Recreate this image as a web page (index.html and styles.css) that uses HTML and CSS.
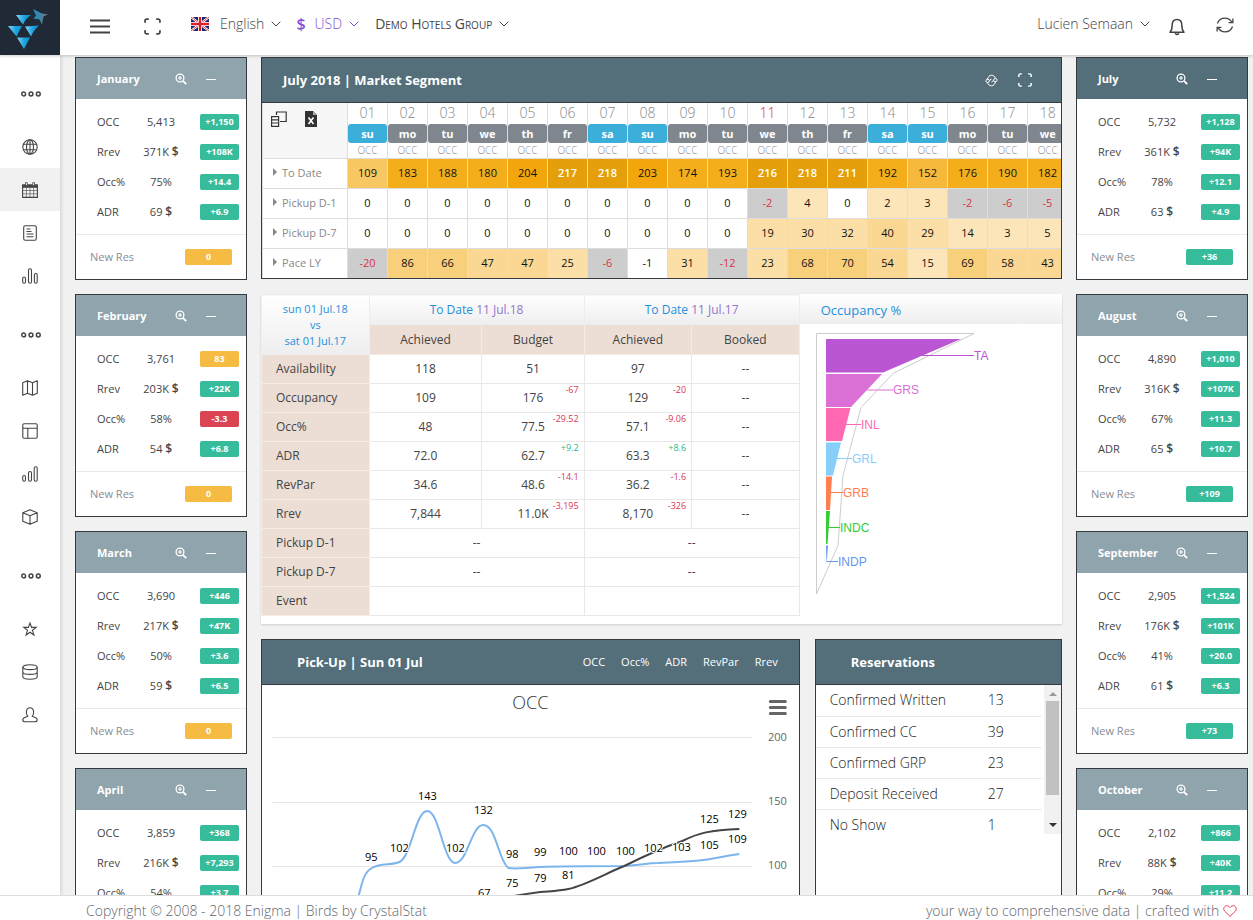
FILE: index.html
```html
<!DOCTYPE html>
<html lang="en">

<head>
    <meta charset="UTF-8">
    <title>Enigma | Market Segment</title>
    <link rel="stylesheet" href="styles.css">
</head>

<body>
    <!-- icons -->
    <svg class="defs" aria-hidden="true">
        <symbol id="i-zoom" viewBox="0 0 12 12"><g fill="none" stroke="currentColor"><circle cx="5" cy="5" r="3.9" stroke-width="1.3"/><path d="M3 5h4M5 3v4" stroke-width="1.1"/><path d="M7.9 7.9l3.3 3.3" stroke-width="1.9"/></g></symbol>
        <symbol id="i-minus" viewBox="0 0 12 12"><path d="M1 6.5h10" stroke="currentColor"/></symbol>
        <symbol id="i-down" viewBox="0 0 10 6"><path d="M.7.7L5 5 9.300.7" fill="none" stroke="currentColor"/></symbol>
        <symbol id="i-dots" viewBox="0 0 20 6"><g fill="none" stroke="currentColor" stroke-width="1.5"><circle cx="2.700" cy="3" r="1.900"/><circle cx="10" cy="3" r="1.900"/><circle cx="17.300" cy="3" r="1.900"/></g></symbol>
        <symbol id="i-full" viewBox="0 0 16 16"><path d="M1 4.500V2.500Q1 1 2.500 1H4.500M11.500 1H13.500Q15 1 15 2.500V4.500M15 11.500V13.500Q15 15 13.500 15H11.500M4.500 15H2.500Q1 15 1 13.500V11.500" fill="none" stroke="currentColor" stroke-width="1.700"/></symbol>
    </svg>

    <header class="topbar">
        <a class="logo" href="#" aria-label="Home">
            <svg width="60" height="55" viewBox="0 0 60 55">
                <defs>
                    <linearGradient id="tri" x1="0" y1="0" x2="1" y2="0"><stop offset="0" stop-color="#8fd4f3"/><stop offset=".55" stop-color="#1ba3e0"/><stop offset="1" stop-color="#1390cf"/></linearGradient>
                    <linearGradient id="bird" x1="0" y1="0" x2="1" y2="0"><stop offset="0" stop-color="#1c8fc4"/><stop offset="1" stop-color="#6d7880"/></linearGradient>
                </defs>
                <g fill="url(#tri)"><path d="M16 15h15q-5 3-8 9.500z"/><path d="M8 26h14l-5.500 10.500z"/><path d="M25 26.500l14-1q-5 4-8 11z"/><path d="M17 37.500h13l-6 11.500z"/></g>
                <path d="M33 9l6 3 3 1.500 6 1-4.500 2-1.500 8-2.500-5-6-1 2.500-3z" fill="url(#bird)"/>
            </svg>
        </a>
        <button class="tool menu" aria-label="Menu"><svg width="20" height="15" viewBox="0 0 20 15"><path d="M0 1.500h20M0 7.500h20M0 13.500h20" stroke="currentColor" stroke-width="1.800"/></svg></button>
        <button class="tool full" aria-label="Fullscreen"><svg width="17" height="17"><use href="#i-full"/></svg></button>
        <button class="drop lang">
            <svg width="18" height="14" viewBox="0 0 18 14"><path fill="#1c2a6b" d="M0 0h18v14H0z"/><path d="M0 0l18 14M18 0L0 14" stroke="#fff" stroke-width="2.200"/><path d="M0 0l18 14M18 0L0 14" stroke="#d8202f" stroke-width=".8"/><path d="M9 0v14M0 7h18" stroke="#fff" stroke-width="4"/><path d="M9 0v14M0 7h18" stroke="#d8202f" stroke-width="2.400"/></svg>
            <span>English</span><svg class="chev"><use href="#i-down"/></svg>
        </button>
        <button class="drop cur"><b>$</b><span>USD</span><svg class="chev"><use href="#i-down"/></svg></button>
        <button class="drop group"><span>Demo Hotels Group</span><svg class="chev"><use href="#i-down"/></svg></button>
        <button class="drop user"><span>Lucien Semaan</span><svg class="chev"><use href="#i-down"/></svg></button>
        <button class="tool bell" aria-label="Notifications"><svg width="16" height="18" viewBox="0 0 16 18"><path d="M1 14.200h14c-2-2-2.200-4-2.200-7.200C12.800 3.500 11 1.500 8 1.500S3.200 3.500 3.200 7c0 3.200-.2 5.200-2.200 7.200z" fill="none" stroke="currentColor" stroke-width="1.500" stroke-linejoin="round"/><path d="M6.200 15.200q1.800 2.400 3.600 0" fill="none" stroke="currentColor" stroke-width="1.500"/></svg></button>
        <button class="tool sync" aria-label="Refresh"><svg width="18" height="16" viewBox="0 0 18 16"><path d="M1.500 6.500C2.500 3.300 5.500 1.200 9 1.200c3 0 5.300 1.500 6.800 4M16.500 9.500C15.500 12.700 12.500 14.800 9 14.800c-3 0-5.300-1.500-6.800-4M16.900 1.500v4.200h-4.300M1.100 14.500v-4.200h4.300" fill="none" stroke="currentColor" stroke-width="1.300"/></svg></button>
    </header>

    <nav class="side">
        <div class="sep"><svg width="20" height="6"><use href="#i-dots"/></svg></div>
        <a href="#" aria-label="World"><svg viewBox="0 0 16 16"><circle cx="8" cy="8" r="7.200"/><ellipse cx="8" cy="8" rx="3.500" ry="7.200"/><path d="M1.500 5.200h13M1.500 10.800h13M8 1v14"/></svg></a>
        <a href="#" class="active" aria-label="Calendar"><svg viewBox="0 0 16 16"><path d="M.6 3h14.800v12.400H.6z"/><path d="M.8 8.500h14.400M.8 11.800h14.400M4.400 5.500v9.700M8 5.500v9.700M11.600 5.500v9.700" stroke-width=".6"/><path d="M.8 3h14.400v2.200H.8z" fill="currentColor"/><path d="M3.500.6h1.800v3H3.500zM10.700.6h1.800v3h-1.800z" fill="#fff" stroke-width=".8"/></svg></a>
        <a href="#" aria-label="Reports"><svg viewBox="0 0 16 16"><rect x="1.700" y=".7" width="12.600" height="14.600" rx="1.500"/><path d="M4.500 4h4M4.500 6.500h5M4.500 9h7M4.500 11.700h7"/></svg></a>
        <a href="#" aria-label="Statistics"><svg viewBox="0 0 16 16"><rect x=".7" y="9" width="2.800" height="6.200" rx="1.400"/><rect x="6.500" y=".8" width="3" height="14.400" rx="1.500"/><rect x="12.400" y="5.500" width="2.800" height="9.700" rx="1.400"/></svg></a>
        <div class="sep"><svg width="20" height="6"><use href="#i-dots"/></svg></div>
        <a href="#" aria-label="Map"><svg viewBox="0 0 16 16"><path d="M.7 2.700l4.800-2 5 2 4.800-2v12.600l-4.800 2-5-2-4.800 2zM5.500.7v12.600M10.500 2.700v12.600" stroke-linejoin="round"/></svg></a>
        <a href="#" aria-label="Layout"><svg viewBox="0 0 16 16"><rect x=".8" y=".8" width="14.400" height="14.400" rx="1.200"/><path d="M.8 5.300h14.400M5.800 5.300v10"/></svg></a>
        <a href="#" aria-label="Performance"><svg viewBox="0 0 16 16"><rect x=".7" y="9.500" width="2.800" height="5.700" rx="1.400"/><rect x="6.500" y="5.500" width="3" height="9.700" rx="1.500"/><rect x="12.200" y=".8" width="3" height="14.400" rx="1.500"/></svg></a>
        <a href="#" aria-label="Packages"><svg viewBox="0 0 16 16"><path d="M8 .7l7.200 3v8.600L8 15.300.8 12.300V3.700zM.8 3.700L8 6.700l7.200-3M8 6.700v8.600" stroke-linejoin="round"/></svg></a>
        <div class="sep"><svg width="20" height="6"><use href="#i-dots"/></svg></div>
        <a href="#" aria-label="Favorites"><svg viewBox="0 0 16 16"><path d="M8 2l1.600 4.400h4.600l-3.700 2.900 1.400 4.700L8 11.200 4.100 14l1.400-4.700-3.700-2.900h4.600z"/></svg></a>
        <a href="#" aria-label="Data"><svg viewBox="0 0 16 16"><ellipse cx="8" cy="3.200" rx="7.200" ry="2.400"/><path d="M.8 3.200v9.600c0 3.200 14.400 3.200 14.400 0V3.200M.8 8c0 3.200 14.400 3.200 14.400 0"/></svg></a>
        <a href="#" aria-label="Account"><svg viewBox="0 0 16 16"><path d="M5.800 9.300C3.500 7 3.800.7 8 .7s4.500 6.300 2.200 8.600c2.500 1 5 1.200 5 3.200 0 1.800-.7 2.300-2 2.300H2.800c-1.300 0-2-.5-2-2.300 0-2 2.500-2.200 5-3.200z"/></svg></a>
    </nav>

    <main class="main">
        <!-- first half of the year -->
        <section class="months">
            <article class="card">
                <h3><span>January</span><svg><use href="#i-zoom"/></svg><svg><use href="#i-minus"/></svg></h3>
                <dl>
                    <dt>OCC</dt><dd>5,413</dd><dd class="tag">+1,150</dd>
                    <dt>Rrev</dt><dd>371K <b>$</b></dd><dd class="tag">+108K</dd>
                    <dt>Occ%</dt><dd>75%</dd><dd class="tag">+14.4</dd>
                    <dt>ADR</dt><dd>69 <b>$</b></dd><dd class="tag">+6.9</dd>
                </dl>
                <p>New Res <span class="tag warn">0</span></p>
            </article>
            <article class="card">
                <h3><span>February</span><svg><use href="#i-zoom"/></svg><svg><use href="#i-minus"/></svg></h3>
                <dl>
                    <dt>OCC</dt><dd>3,761</dd><dd class="tag warn">83</dd>
                    <dt>Rrev</dt><dd>203K <b>$</b></dd><dd class="tag">+22K</dd>
                    <dt>Occ%</dt><dd>58%</dd><dd class="tag bad">-3.3</dd>
                    <dt>ADR</dt><dd>54 <b>$</b></dd><dd class="tag">+6.8</dd>
                </dl>
                <p>New Res <span class="tag warn">0</span></p>
            </article>
            <article class="card">
                <h3><span>March</span><svg><use href="#i-zoom"/></svg><svg><use href="#i-minus"/></svg></h3>
                <dl>
                    <dt>OCC</dt><dd>3,690</dd><dd class="tag">+446</dd>
                    <dt>Rrev</dt><dd>217K <b>$</b></dd><dd class="tag">+47K</dd>
                    <dt>Occ%</dt><dd>50%</dd><dd class="tag">+3.6</dd>
                    <dt>ADR</dt><dd>59 <b>$</b></dd><dd class="tag">+6.5</dd>
                </dl>
                <p>New Res <span class="tag warn">0</span></p>
            </article>
            <article class="card">
                <h3><span>April</span><svg><use href="#i-zoom"/></svg><svg><use href="#i-minus"/></svg></h3>
                <dl>
                    <dt>OCC</dt><dd>3,859</dd><dd class="tag">+368</dd>
                    <dt>Rrev</dt><dd>216K <b>$</b></dd><dd class="tag">+7,293</dd>
                    <dt>Occ%</dt><dd>54%</dd><dd class="tag">+3.7</dd>
                </dl>
            </article>
        </section>

        <div class="center">
            <section class="panel market">
                <h2>July 2018 | Market Segment
                    <button aria-label="Reload"><svg width="13" height="13" viewBox="0 0 13 13"><g fill="none" stroke="currentColor"><path d="M2.500 5.500C3 2.800 4.500 1.200 6.500 1.200c2 0 3.300 1.200 3.900 3M10.500 7.500c-.5 2.700-2 4.300-4 4.300-2 0-3.300-1.200-3.900-3"/><circle cx="2.600" cy="6.800" r="1.700"/><circle cx="10.400" cy="6.200" r="1.700"/><path d="M4.200 6.500l2.300-1.500M8.800 6.500l-2.300 1.500"/></g></svg></button>
                    <button aria-label="Fullscreen"><svg width="14" height="14"><use href="#i-full"/></svg></button>
                </h2>
                <div class="clip">
                    <table>
                        <thead>
                            <tr>
                                <th class="corner" rowspan="3">
                                    <svg width="16" height="16" viewBox="0 0 16 16"><path d="M5.500 4V1h9.700v9.500H9" fill="none" stroke="#333" stroke-width="1.200"/><path d="M.6 5.600h7v9.800h-7zM.6 8.800h7M.6 12h7" fill="#fff" stroke="#333" stroke-width="1.200"/></svg>
                                    <svg width="12" height="16" viewBox="0 0 12 16"><path d="M0 0h8l4 4v12H0z" fill="#333"/><path d="M8 0v4h4z" fill="#aaa"/><path d="M3.500 6.500l5 6.500M8.500 6.500l-5 6.500" stroke="#fff" stroke-width="1.600"/></svg>
                                </th>
                                <th>01</th><th>02</th><th>03</th><th>04</th><th>05</th><th>06</th><th>07</th><th>08</th><th>09</th><th>10</th><th class="today">11</th><th>12</th><th>13</th><th>14</th><th>15</th><th>16</th><th>17</th><th>18</th>
                            </tr>
                            <tr class="days">
                                <th><i class="we">su</i></th><th><i>mo</i></th><th><i>tu</i></th><th><i>we</i></th><th><i>th</i></th><th><i>fr</i></th><th><i class="we">sa</i></th><th><i class="we">su</i></th><th><i>mo</i></th><th><i>tu</i></th><th><i>we</i></th><th><i>th</i></th><th><i>fr</i></th><th><i class="we">sa</i></th><th><i class="we">su</i></th><th><i>mo</i></th><th><i>tu</i></th><th><i>we</i></th>
                            </tr>
                            <tr class="occ">
                                <th>OCC</th><th>OCC</th><th>OCC</th><th>OCC</th><th>OCC</th><th>OCC</th><th>OCC</th><th>OCC</th><th>OCC</th><th>OCC</th><th>OCC</th><th>OCC</th><th>OCC</th><th>OCC</th><th>OCC</th><th>OCC</th><th>OCC</th><th>OCC</th>
                            </tr>
                        </thead>
                        <tbody>
                            <tr>
                                <th>To Date</th><td class="h5">109</td><td class="h7">183</td><td class="h7">188</td><td class="h7">180</td><td class="h8">204</td><td class="h9">217</td><td class="h9">218</td><td class="h8">203</td><td class="h7">174</td><td class="h7">193</td><td class="h9">216</td><td class="h9">218</td><td class="h9">211</td><td class="h7">192</td><td class="h6">152</td><td class="h7">176</td><td class="h7">190</td><td class="h7">182</td>
                            </tr>
                            <tr>
                                <th>Pickup D-1</th><td>0</td><td>0</td><td>0</td><td>0</td><td>0</td><td>0</td><td>0</td><td>0</td><td>0</td><td>0</td><td class="neg">-2</td><td class="h1">4</td><td>0</td><td class="h1">2</td><td class="h1">3</td><td class="neg">-2</td><td class="neg">-6</td><td class="neg">-5</td>
                            </tr>
                            <tr>
                                <th>Pickup D-7</th><td>0</td><td>0</td><td>0</td><td>0</td><td>0</td><td>0</td><td>0</td><td>0</td><td>0</td><td>0</td><td class="h2">19</td><td class="h2">30</td><td class="h2">32</td><td class="h3">40</td><td class="h2">29</td><td class="h1">14</td><td class="h1">3</td><td class="h1">5</td>
                            </tr>
                            <tr>
                                <th>Pace LY</th><td class="neg">-20</td><td class="h4">86</td><td class="h4">66</td><td class="h3">47</td><td class="h3">47</td><td class="h2">25</td><td class="neg">-6</td><td>-1</td><td class="h2">31</td><td class="neg">-12</td><td class="h2">23</td><td class="h4">68</td><td class="h4">70</td><td class="h3">54</td><td class="h1">15</td><td class="h4">69</td><td class="h3">58</td><td class="h3">43</td>
                            </tr>
                        </tbody>
                    </table>
                </div>
            </section>

            <section class="compare">
                <table>
                    <colgroup><col class="c1"><col class="c2"><col class="c3"><col class="c4"><col class="c5"></colgroup>
                    <thead>
                        <tr><th class="versus" rowspan="2">sun 01 Jul.18<br>vs<br>sat 01 Jul.17</th><th class="date" colspan="2">To Date <span>11 Jul.18</span></th><th class="date" colspan="2">To Date <span>11 Jul.17</span></th></tr>
                        <tr><th>Achieved</th><th>Budget</th><th>Achieved</th><th>Booked</th></tr>
                    </thead>
                    <tbody>
                        <tr><th>Availability</th><td>118</td><td>51</td><td>97</td><td>--</td></tr>
                        <tr><th>Occupancy</th><td>109</td><td>176<sup>-67</sup></td><td>129<sup>-20</sup></td><td>--</td></tr>
                        <tr><th>Occ%</th><td>48</td><td>77.5<sup>-29.52</sup></td><td>57.1<sup>-9.06</sup></td><td>--</td></tr>
                        <tr><th>ADR</th><td>72.0</td><td>62.7<sup class="up">+9.2</sup></td><td>63.3<sup class="up">+8.6</sup></td><td>--</td></tr>
                        <tr><th>RevPar</th><td>34.6</td><td>48.6<sup>-14.1</sup></td><td>36.2<sup>-1.6</sup></td><td>--</td></tr>
                        <tr><th>Rrev</th><td>7,844</td><td>11.0K<sup>-3,195</sup></td><td>8,170<sup>-326</sup></td><td>--</td></tr>
                        <tr><th>Pickup D-1</th><td colspan="2">--</td><td colspan="2">--</td></tr>
                        <tr><th>Pickup D-7</th><td colspan="2">--</td><td colspan="2">--</td></tr>
                        <tr><th>Event</th><td colspan="2"></td><td colspan="2"></td></tr>
                    </tbody>
                </table>
                <div class="funnel">
                    <h4>Occupancy %</h4>
                    <svg viewBox="0 0 260 290">
                        <path d="M16.500 9.500H174L93 49.500 61 83.500 43 151.500 38 221.500 16.500 270z" fill="none" stroke="#ccc"/>
                        <path d="M26 15h135L83 48.500H26z" fill="#ba55d3"/>
                        <path d="M26 50h56L51 83H26z" fill="#da70d6"/>
                        <path d="M26 84h24.500L42 117H26z" fill="#ff69b4"/>
                        <path d="M26 118.500h15L33 151.500h-7z" fill="#87cefa"/>
                        <path d="M26 152.500h6L30 186h-4z" fill="#ff7f50"/>
                        <path d="M26 187h4l-2.500 33H26z" fill="#32cd32"/>
                        <path d="M26 221.500h2L26.500 241z" fill="#6495ed"/>
                        <path d="M122 31.500h52" stroke="#ba55d3"/><path d="M67 66h26" stroke="#da70d6"/><path d="M46 100.500h15" stroke="#ff69b4"/><path d="M37 134.500h15" stroke="#87cefa"/><path d="M31 168.500h12" stroke="#ff7f50"/><path d="M28 203.500h12" stroke="#32cd32"/><path d="M27 237.500h11" stroke="#6495ed"/>
                        <text x="174" y="36" fill="#ba55d3">TA</text><text x="93" y="70" fill="#da70d6">GRS</text><text x="61" y="105" fill="#ff69b4">INL</text><text x="52" y="139" fill="#87cefa">GRL</text><text x="43" y="173" fill="#ff7f50">GRB</text><text x="40" y="208" fill="#32cd32">INDC</text><text x="38" y="242" fill="#6495ed">INDP</text>
                    </svg>
                </div>
            </section>

            <div class="bottom">
                <section class="panel pickup">
                    <h2>Pick-Up | Sun 01 Jul
                        <span class="tabs"><a href="#">OCC</a><a href="#">Occ%</a><a href="#">ADR</a><a href="#">RevPar</a><a href="#">Rrev</a></span>
                    </h2>
                    <svg class="chart" viewBox="0 0 536 300">
                        <path d="M10 52.500h480M10 117.500h480M10 181.500h480M10 245.500h480" stroke="#e6e6e6"/>
                        <path d="M508 16.500h15M508 22.500h15M508 28.500h15" stroke="#666" stroke-width="3" stroke-linecap="round"/>
                        <path d="M96 212C100 196 102 188 108 184C118 177 128 181 137 177C149 172 153 126 165 126C177 126 181 178 193 178C205 178 209 140 221 140C234 140 236 176 246 183C252 184 266 183 278 182C300 181 330 181 362 181C380 180 384 178 396 178C420 177 440 176 448 174C460 172 468 170 477 169" fill="none" stroke="#7cb5ec" stroke-width="2"/>
                        <path d="M221 219C240 212 262 209 278 207C290 206 296 206 306 204C324 200 344 188 362 181C384 170 408 160 420 156C436 148 448 145 477 144" fill="none" stroke="#434348" stroke-width="2"/>
                        <text class="title" x="268" y="24">OCC</text>
                        <g class="labels">
                            <text x="109" y="176">95</text><text x="137" y="167">102</text><text x="165" y="115">143</text><text x="193" y="167">102</text><text x="221" y="129">132</text><text x="250" y="173">98</text><text x="278" y="171">99</text><text x="306" y="170">100</text><text x="334" y="170">100</text><text x="363" y="170">100</text><text x="391" y="167">102</text><text x="419" y="166">103</text><text x="447" y="164">105</text><text x="475" y="158">109</text>
                            <text x="222" y="212">67</text><text x="250" y="202">75</text><text x="278" y="197">79</text><text x="306" y="194">81</text><text x="447" y="138">125</text><text x="475" y="133">129</text>
                        </g>
                        <g class="axis"><text x="515" y="56">200</text><text x="515" y="120">150</text><text x="515" y="184">100</text></g>
                    </svg>
                </section>
                <section class="panel res">
                    <h2>Reservations</h2>
                    <div class="list">
                        <table>
                            <tr><th>Confirmed Written</th><td>13</td></tr>
                            <tr><th>Confirmed CC</th><td>39</td></tr>
                            <tr><th>Confirmed GRP</th><td>23</td></tr>
                            <tr><th>Deposit Received</th><td>27</td></tr>
                            <tr><th>No Show</th><td>1</td></tr>
                        </table>
                        <div class="scroll"><i class="up"></i><i class="thumb"></i><i class="down"></i></div>
                    </div>
                </section>
            </div>
        </div>

        <!-- second half of the year -->
        <section class="months">
            <article class="card first">
                <h3><span>July</span><svg><use href="#i-zoom"/></svg><svg><use href="#i-minus"/></svg></h3>
                <dl>
                    <dt>OCC</dt><dd>5,732</dd><dd class="tag">+1,128</dd>
                    <dt>Rrev</dt><dd>361K <b>$</b></dd><dd class="tag">+94K</dd>
                    <dt>Occ%</dt><dd>78%</dd><dd class="tag">+12.1</dd>
                    <dt>ADR</dt><dd>63 <b>$</b></dd><dd class="tag">+4.9</dd>
                </dl>
                <p>New Res <span class="tag">+36</span></p>
            </article>
            <article class="card">
                <h3><span>August</span><svg><use href="#i-zoom"/></svg><svg><use href="#i-minus"/></svg></h3>
                <dl>
                    <dt>OCC</dt><dd>4,890</dd><dd class="tag">+1,010</dd>
                    <dt>Rrev</dt><dd>316K <b>$</b></dd><dd class="tag">+107K</dd>
                    <dt>Occ%</dt><dd>67%</dd><dd class="tag">+11.3</dd>
                    <dt>ADR</dt><dd>65 <b>$</b></dd><dd class="tag">+10.7</dd>
                </dl>
                <p>New Res <span class="tag">+109</span></p>
            </article>
            <article class="card">
                <h3><span>September</span><svg><use href="#i-zoom"/></svg><svg><use href="#i-minus"/></svg></h3>
                <dl>
                    <dt>OCC</dt><dd>2,905</dd><dd class="tag">+1,524</dd>
                    <dt>Rrev</dt><dd>176K <b>$</b></dd><dd class="tag">+101K</dd>
                    <dt>Occ%</dt><dd>41%</dd><dd class="tag">+20.0</dd>
                    <dt>ADR</dt><dd>61 <b>$</b></dd><dd class="tag">+6.3</dd>
                </dl>
                <p>New Res <span class="tag">+73</span></p>
            </article>
            <article class="card">
                <h3><span>October</span><svg><use href="#i-zoom"/></svg><svg><use href="#i-minus"/></svg></h3>
                <dl>
                    <dt>OCC</dt><dd>2,102</dd><dd class="tag">+866</dd>
                    <dt>Rrev</dt><dd>88K <b>$</b></dd><dd class="tag">+40K</dd>
                    <dt>Occ%</dt><dd>29%</dd><dd class="tag">+11.2</dd>
                </dl>
            </article>
        </section>
    </main>

    <footer class="foot">
        <span>Copyright © 2008 - 2018 Enigma | Birds by CrystalStat</span>
        <span>your way to comprehensive data | crafted with <svg width="14" height="12" viewBox="0 0 14 12"><path d="M7 11.300L1.500 6C-.8 3 2.500-1 6 1.500l1 1 1-1c3.500-2.500 6.800 1.500 4.500 4.500z" fill="none" stroke="#e8405a"/></svg></span>
    </footer>
</body>

</html>
```
FILE: styles.css
```css
/*reset*/
body,
h2,
h3,
h4,
p,
dl,
dt,
dd,
button,
table,
th,
td {
    margin: 0;
    padding: 0;
}

* {
    box-sizing: border-box;
}

body {
    display: grid;
    grid-template: 55px minmax(0, 1fr) 25px / 60px minmax(0, 1fr);
    height: 100vh;
    overflow: hidden;
    background: #f1f1f1;
    font: 12px/16px "Open Sans", "Noto Sans", sans-serif;
    color: #444;
}

a {
    color: inherit;
    text-decoration: none;
}

button {
    border: 0;
    background: none;
    color: inherit;
    font: inherit;
    cursor: pointer;
}

th {
    font-weight: inherit;
}

i {
    font-style: normal;
}

.defs {
    position: absolute;
    width: 0;
    height: 0;
}

/*top bar*/
.topbar {
    grid-column: 1 / 3;
    display: flex;
    align-items: center;
    padding-right: 19px;
    background: #fff;
    box-shadow: 0 1px 3px rgba(0, 0, 0, .2);
    z-index: 3;
    font-size: 14px;
    font-weight: 300;
    color: #444;
}

.topbar svg {
    display: block;
}

.logo {
    background: #1f2a36;
}

.tool {
    padding-bottom: 2px;
}

.menu {
    margin-left: 30px;
}

.full {
    margin-left: 34px;
}

.drop {
    display: flex;
    align-items: center;
    gap: 7px;
    padding-bottom: 7px;
}

.drop .chev {
    width: 10px;
    height: 6px;
}

.lang {
    margin-left: 30px;
}

.lang span {
    margin-left: 4px;
}

.cur {
    margin-left: 15px;
    color: #7b52d8;
}

.cur b {
    font-size: 16px;
    font-weight: 600;
    margin-right: 2px;
}

.group {
    margin-left: 16px;
    font-variant: small-caps;
    font-weight: 400;
}

.user {
    margin-left: auto;
}

.bell {
    margin-left: 19px;
}

.sync {
    margin-left: 31px;
    padding-bottom: 5px;
}

/*side menu*/
.side {
    padding-top: 1px;
    background: #fff;
    box-shadow: 1px 0 4px rgba(0, 0, 0, .15);
    z-index: 2;
    color: #444;
}

.side a,
.sep {
    display: flex;
    align-items: center;
    justify-content: center;
    height: 43px;
}

.sep {
    height: 69px;
    padding: 6px 0 0 2px;
}

.side a svg {
    width: 16px;
    height: 16px;
    fill: none;
    stroke: currentColor;
    stroke-width: 1.1;
}

.side a.active {
    background: #f1f1f1;
}

/*content*/
.main {
    display: grid;
    grid-template-columns: 172px minmax(0, 1fr) 172px;
    gap: 14px;
    padding: 2px 5px 0 15px;
    overflow: hidden;
}

.months {
    display: flex;
    flex-direction: column;
    gap: 14px;
}

.card {
    flex: none;
    border: 1px solid #333b40;
    background: #fff;
}

.card h3 {
    display: flex;
    align-items: center;
    height: 41px;
    padding: 0 29px 0 21px;
    background: #90a4ae;
    color: #fff;
    font-size: 11px;
    font-weight: 700;
}

.card h3 span {
    flex: 1;
}

.card h3 svg {
    width: 12px;
    height: 12px;
    margin-left: 18px;
}

.card.first h3 {
    background: #546e7a;
}

.card dl {
    display: grid;
    grid-template-columns: 40px 1fr 39px;
    grid-auto-rows: 30px;
    align-items: center;
    padding: 8px 7px 7px 21px;
    border-bottom: 1px solid #eaeaea;
    font-size: 11px;
}

.card dd {
    padding-right: 15px;
    text-align: center;
    white-space: nowrap;
}

.card dd b {
    font-weight: 600;
    font-size: 12px;
}

.card .tag {
    padding: 0;
    border-radius: 2px;
    background: #37bc9b;
    color: #fff;
    font-size: 9px;
    font-weight: 700;
    line-height: 16px;
    text-align: center;
}

.card .warn {
    background: #f6bb42;
}

.card .bad {
    background: #da4453;
}

.card p {
    display: flex;
    align-items: center;
    justify-content: space-between;
    height: 44px;
    padding: 0 14px;
    color: #868e96;
    font-size: 11px;
}

.card p .tag {
    width: 47px;
}

.center {
    display: flex;
    flex-direction: column;
    gap: 15px;
}

.panel {
    border: 1px solid #333b40;
    background: #fff;
}

.panel h2 {
    display: flex;
    align-items: center;
    height: 45px;
    padding: 0 29px 0 21px;
    border-bottom: 1px solid #333b40;
    background: #546e7a;
    color: #fff;
    font-size: 13px;
    font-weight: 700;
}

.panel h2 svg {
    display: block;
}

.panel h2 button {
    margin-left: 20px;
}

.panel h2 button:first-of-type {
    margin-left: auto;
}

/*market segment*/
.clip {
    height: 175px;
    overflow: hidden;
}

.market table {
    width: 805px;
    border-collapse: collapse;
    table-layout: fixed;
    text-align: center;
    font-size: 11px;
}

.market th {
    width: 40px;
    height: 20px;
    border-left: 1px solid #ddd;
    color: #888;
    font-size: 14px;
    font-weight: 300;
}

.market th.corner {
    width: 85px;
    padding: 8px 0 0 8px;
    background: #f7f7f7;
    text-align: left;
    vertical-align: top;
}

.corner svg {
    margin-right: 14px;
}

.market .today {
    color: #e01b24;
}

.days i {
    display: block;
    border-radius: 3px;
    background: #7f868e;
    color: #fff;
    font-size: 11px;
    font-weight: 700;
    line-height: 19px;
}

.days .we {
    background: #3bafda;
}

.market .occ th {
    height: 15px;
    font-size: 10px;
    line-height: 12px;
}

.market tbody th,
.market td {
    height: 30px;
    border: 1px solid #ddd;
    color: #111;
}

.market tbody th {
    padding-left: 8px;
    color: #888;
    font-size: 11px;
    font-weight: 400;
    text-align: left;
}

.market tbody th::before {
    content: "";
    display: inline-block;
    margin: 0 5px 1px 2px;
    border: 4px solid transparent;
    border-left-color: #888;
    border-right-width: 0;
}

.market .neg {
    background: #cdcdcd;
    color: #da3545;
}

.h1 {
    background: #fce5b8;
}

.h2 {
    background: #fbdfa6;
}

.h3 {
    background: #fad893;
}

.h4 {
    background: #f8d07c;
}

.h5 {
    background: #f7c862;
}

.h6 {
    background: #f7b93c;
}

.h7 {
    background: #f4ae1b;
}

.h8 {
    background: #f2a60b;
}

.market .h9 {
    background: #e59f0a;
    color: #fff;
    font-weight: 600;
}

/*compare*/
.compare {
    display: grid;
    grid-template-columns: 538fr 262fr;
    align-items: start;
    height: 330px;
    background: #fff;
    box-shadow: 0 1px 2px rgba(0, 0, 0, .15);
}

.compare table {
    width: 100%;
    border-collapse: collapse;
    table-layout: fixed;
    text-align: center;
    font-size: 12px;
}

.c1,
.c4 {
    width: 20%;
}

.c2 {
    width: 21%;
}

.c3 {
    width: 19%;
}

.compare th,
.compare td {
    height: 29px;
    border: 1px solid #e8e8e8;
}

.compare thead th {
    height: 30px;
}

.compare th {
    border-color: #f5ece5;
    background: #ecded4;
}

.compare tbody th {
    padding-left: 14px;
    text-align: left;
}

.compare th.versus,
.compare th.date,
.funnel h4 {
    border-color: #eee;
    background: linear-gradient(#fff, #eee);
    color: #1e90dd;
}

.versus {
    font-size: 11px;
}

.date span {
    color: #9575cd;
}

.compare td {
    position: relative;
}

/* difference, hung over the corner of its cell */
.compare sup {
    position: absolute;
    top: 0;
    right: 5px;
    color: #da3550;
    font-size: 9px;
    line-height: 12px;
}

.compare sup.up {
    color: #2bb88a;
}

.funnel h4 {
    height: 30px;
    padding-left: 21px;
    font-size: 13px;
    font-weight: 400;
    line-height: 32px;
}

.funnel svg {
    display: block;
    width: 100%;
    max-width: 260px;
    font: 12px "Liberation Sans", Arial, sans-serif;
}

/*pick-up and reservations*/
.bottom {
    display: grid;
    grid-template-columns: 538fr 247fr;
    gap: 15px;
}

.bottom .panel h2 {
    padding-left: 35px;
    padding-right: 21px;
}

.tabs {
    display: flex;
    gap: 16px;
    margin-left: auto;
    font-size: 11px;
    font-weight: 400;
}

.chart {
    display: block;
    width: 100%;
    height: 300px;
}

.chart text {
    text-anchor: middle;
    font-size: 11px;
}

.chart .title {
    fill: #333;
    font-size: 18px;
    font-weight: 300;
}

.labels {
    fill: #000;
    stroke: #fff;
    stroke-width: 2px;
    paint-order: stroke;
}

.axis {
    fill: #666;
}

.list {
    display: flex;
    font-size: 14px;
    font-weight: 300;
    color: #222;
}

.res table {
    flex: 1;
    margin-right: 2px;
    border-collapse: collapse;
    text-align: left;
}

.res th,
.res td {
    height: 31px;
    border-bottom: 1px solid #eaeaea;
}

.res tr:last-child > * {
    border-bottom: 0;
}

.res th {
    padding-left: 14px;
    width: 76%;
}

.scroll {
    display: flex;
    flex-direction: column;
    align-items: center;
    width: 17px;
    height: 149px;
    padding: 7px 0;
    background: #f1f1f1;
}

.scroll i {
    border: 4px solid transparent;
}

.scroll .up {
    border-top: 0;
    border-bottom-color: #999;
}

.scroll .down {
    margin-top: auto;
    border-bottom: 0;
    border-top-color: #333;
}

.scroll .thumb {
    width: 13px;
    height: 94px;
    margin-top: 5px;
    border: 0;
    background: #c1c1c1;
}

/*footer*/
.foot {
    grid-column: 1 / 3;
    z-index: 4;
    display: flex;
    align-items: center;
    justify-content: space-between;
    padding: 6px 16px 0 86px;
    border-top: 1px solid #ddd;
    background: #fff;
    color: #5f676e;
    font-size: 14px;
    font-weight: 300;
}

.foot svg {
    vertical-align: -1px;
}
```
